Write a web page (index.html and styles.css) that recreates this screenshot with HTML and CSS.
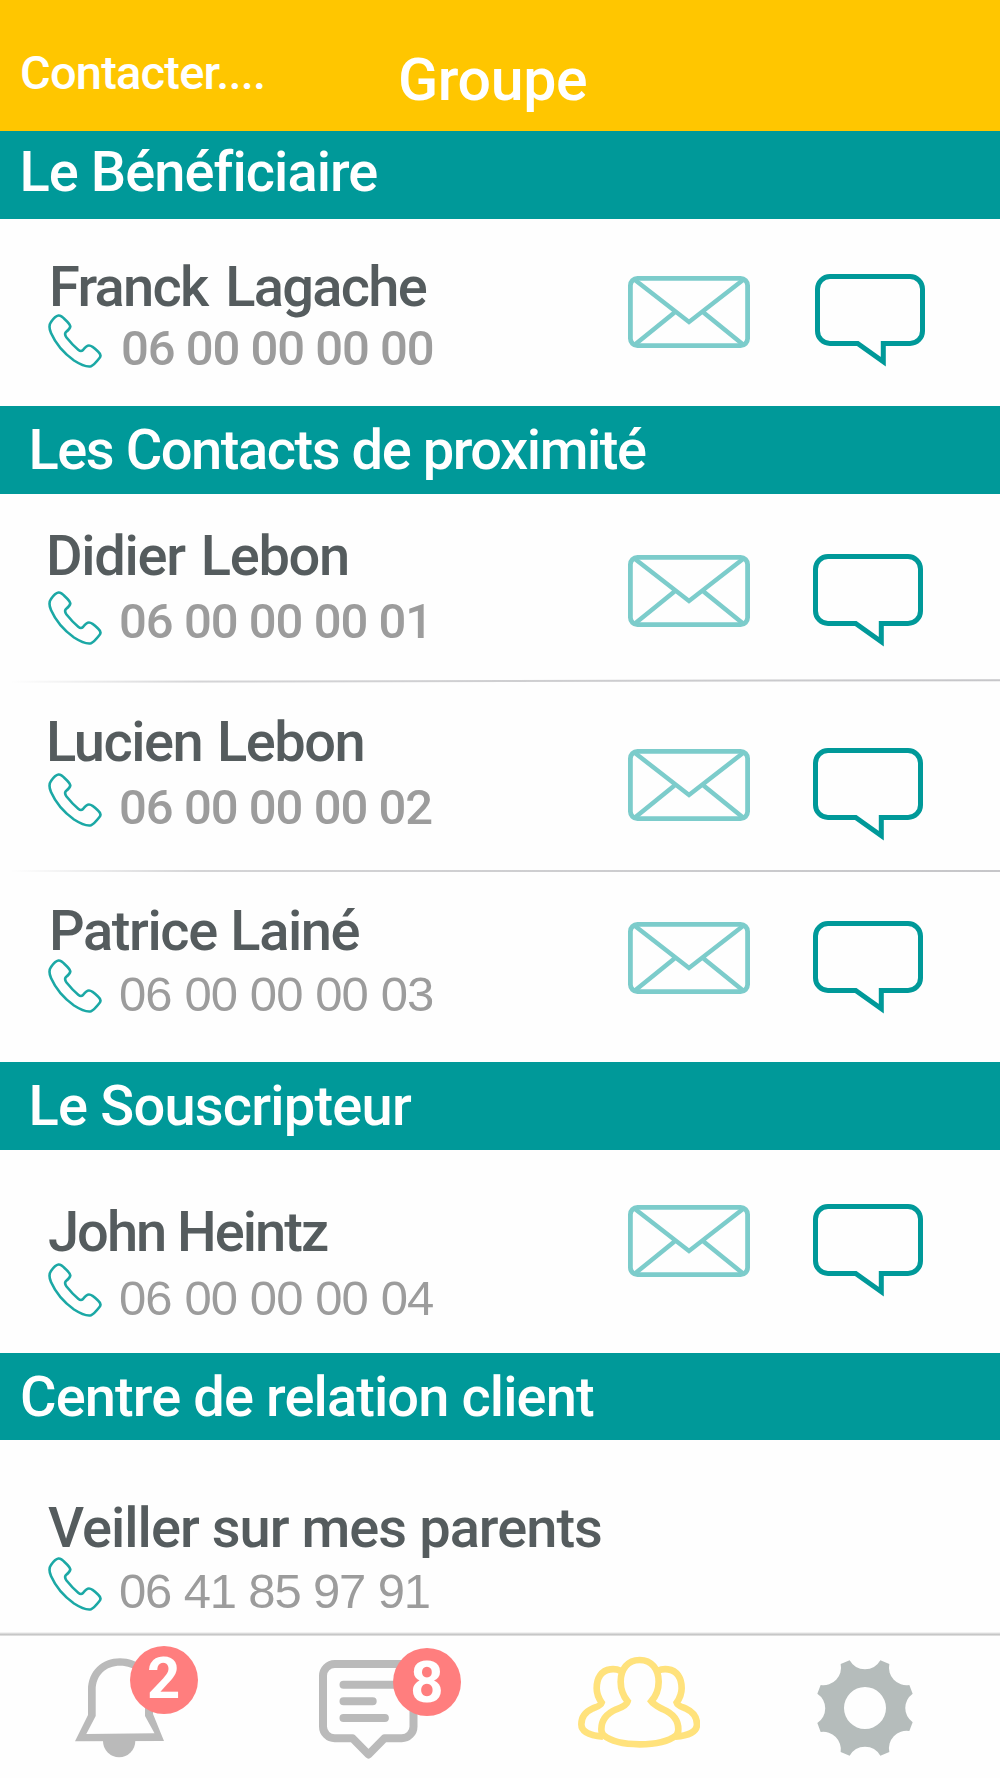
FILE: index.html
```html
<!DOCTYPE html>
<html lang="fr">
<head>
<meta charset="utf-8">
<title>Groupe</title>
<link rel="stylesheet" href="styles.css">
</head>
<body>
<svg class="defs" aria-hidden="true">
  <symbol id="phone" viewBox="0 0 54 54">
    <path fill="none" stroke="#1ba8a5" stroke-width="2.600" d="M10.5 1.5Q13 1.2 17 5.5Q22 10 22.3 12.5Q22 15 18 18Q16 20 18.5 23.5Q24.500 31 30.500 36Q33 38 35 36Q38.500 31.500 41 31.500Q44 31.500 50 37.500Q54 41 51.500 44Q46 51 43 52.300Q37 53.500 26 46.500Q10 35 3 19Q0 12 3 8Q7 2 10.500 1.500Z"/>
  </symbol>
  <symbol id="mail" viewBox="0 0 122 72">
    <g fill="none" stroke="#7ccccb">
      <rect x="2.400" y="2.400" width="117.200" height="67.200" rx="7" stroke-width="4.800"/>
      <path stroke-width="4.500" d="M7 4L61 46L115 4M7 68.500L46.500 36.500M115 68.500L75.500 36.500"/>
    </g>
  </symbol>
  <symbol id="chat" viewBox="0 0 110 93">
    <path fill="none" stroke="#009999" stroke-width="5" d="M15 2.500H95A12.500 12.500 0 0 1 107.500 15V57A12.500 12.500 0 0 1 95 69.500H68.300V87.700L42.700 69.500H15A12.500 12.500 0 0 1 2.500 57V15A12.500 12.500 0 0 1 15 2.500Z"/>
  </symbol>
</svg>

<header class="header">
  <span class="header-action">Contacter....</span>
  <h1 class="header-title">Groupe</h1>
</header>

<main>
  <h2 class="band band-beneficiary">Le Bénéficiaire</h2>
  <section class="contact franck">
    <div class="info">
      <div class="name">Franck Lagache</div>
      <div class="phone"><svg class="phone-icon"><use href="#phone"/></svg><span class="number">06 00 00 00 00</span></div>
    </div>
    <svg class="mail"><use href="#mail"/></svg>
    <svg class="chat"><use href="#chat"/></svg>
  </section>

  <h2 class="band band-nearby">Les Contacts de proximité</h2>
  <section class="contact didier">
    <div class="info">
      <div class="name">Didier Lebon</div>
      <div class="phone"><svg class="phone-icon"><use href="#phone"/></svg><span class="number">06 00 00 00 01</span></div>
    </div>
    <svg class="mail"><use href="#mail"/></svg>
    <svg class="chat"><use href="#chat"/></svg>
  </section>
  <div class="divider divider-tilted"></div>
  <section class="contact lucien">
    <div class="info">
      <div class="name">Lucien Lebon</div>
      <div class="phone"><svg class="phone-icon"><use href="#phone"/></svg><span class="number">06 00 00 00 02</span></div>
    </div>
    <svg class="mail"><use href="#mail"/></svg>
    <svg class="chat"><use href="#chat"/></svg>
  </section>
  <div class="divider"></div>
  <section class="contact patrice">
    <div class="info">
      <div class="name">Patrice Lainé</div>
      <div class="phone"><svg class="phone-icon"><use href="#phone"/></svg><span class="number thin">06 00 00 00 03</span></div>
    </div>
    <svg class="mail"><use href="#mail"/></svg>
    <svg class="chat"><use href="#chat"/></svg>
  </section>

  <h2 class="band band-subscriber">Le Souscripteur</h2>
  <section class="contact john">
    <div class="info">
      <div class="name">John Heintz</div>
      <div class="phone"><svg class="phone-icon"><use href="#phone"/></svg><span class="number thin">06 00 00 00 04</span></div>
    </div>
    <svg class="mail"><use href="#mail"/></svg>
    <svg class="chat"><use href="#chat"/></svg>
  </section>

  <h2 class="band band-support">Centre de relation client</h2>
  <section class="contact veiller">
    <div class="info">
      <div class="name">Veiller sur mes parents</div>
      <div class="phone"><svg class="phone-icon"><use href="#phone"/></svg><span class="number thin">06 41 85 97 91</span></div>
    </div>
  </section>
</main>

<nav class="tabs">
  <div class="tab tab-alerts">
    <svg width="89" height="99.500" viewBox="75 28 89 99.500" fill="#bababa">
      <path fill-rule="evenodd" d="M75 111.300L88 85V60C88 41 102 28.300 120 28.300C138 28.300 153 41 153 60V84L164 111ZM86.300 104L95.700 86V60C95.700 45 106 35.700 120 35.700C135 35.700 145 45 145 60V86L154.500 103.300Z"/>
      <path d="M103 111H135.300A16.150 16.150 0 0 1 103 111Z"/>
    </svg>
    <span class="badge">2</span>
  </div>
  <div class="tab tab-messages">
    <svg width="99" height="100" viewBox="318.800 30 99 100" fill="none" stroke="#bababa" stroke-width="8" stroke-linejoin="round" stroke-linecap="round">
      <path d="M334.500 34H401.500A11.800 11.800 0 0 1 413.300 45.800V96.400A11.800 11.800 0 0 1 401.500 108.200H384.300L368.300 124.500L352.300 108.200H334.500A11.800 11.800 0 0 1 322.800 96.400V45.800A11.800 11.800 0 0 1 334.500 34Z"/>
      <path d="M343.300 54.700H396M343.300 71.200H372.500M343.300 87.900H384.700"/>
    </svg>
    <span class="badge">8</span>
  </div>
  <div class="tab tab-group">
    <svg width="122" height="92.300" viewBox="235 78 366 277" fill="none" stroke="#ffe27c" stroke-width="20">
      <path id="side" d="M362 122C352 117 342 117 332 118C305 121 291 145 291 175C291 190 296 204 306 218C303 228 292 230 280 235C258 245 245 262 245 283C245 305 270 317 310 320"/>
      <use href="#side" transform="translate(837 0) scale(-1 1)"/>
      <path d="M420 90C384 90 363 118 363 155C363 178 369 196 384 214C381 225 370 231 350 238C322 250 305 270 305 298C305 305 306 311 312 316C335 335 375 343 420 343C465 343 505 335 530 316C535 311 536 305 536 298C536 270 518 250 490 238C475 230 464 226 455 214C471 196 477 178 477 155C477 118 456 90 420 90Z"/>
    </svg>
  </div>
  <div class="tab tab-settings">
    <svg width="96" height="96" viewBox="-144 -144 288 288" fill="#b5bcbb">
      <path fill-rule="evenodd" d="M-46 -143A52.700 52.700 0 0 0 46 -143L73 -132A52.700 52.700 0 0 0 133 -69L143 -43A52.700 52.700 0 0 0 143 43L133 69A52.700 52.700 0 0 0 73 132L46 143A52.700 52.700 0 0 0 -46 143L-73 132A52.700 52.700 0 0 0 -133 72L-143 45A52.700 52.700 0 0 0 -143 -43L-133 -69A52.700 52.700 0 0 0 -73 -132ZM0 -63A63 63 0 1 0 0 63A63 63 0 1 0 0 -63Z"/>
    </svg>
  </div>
</nav>
</body>
</html>
```
FILE: styles.css
```css
* { box-sizing: border-box; }

body {
  margin: 0;
  width: 1000px;
  height: 1778px;
  overflow: hidden;
  background: #fefefe;
  font-family: Roboto, "Liberation Sans", sans-serif;
  font-weight: 500;
}

svg { display: block; }
.defs { width: 0; height: 0; }

.header {
  display: grid;
  grid-template-columns: 378px auto;
  height: 131px;
  padding-left: 20px;
  background: #ffc600;
  color: #fff;
}
.header-action {
  margin-top: 48px;
  font-size: 47px;
  line-height: 50px;
  letter-spacing: -0.78px;
}
.header-title {
  margin: 50px 0 0;
  font-size: 59px;
  font-weight: 500;
  line-height: 60px;
  letter-spacing: -0.35px;
}

.band {
  margin: 0;
  height: 87.500px;
  padding: 14px 0 0 28.500px;
  background: #009999;
  color: #fff;
  font-size: 56px;
  font-weight: 500;
  line-height: 60px;
  white-space: nowrap;
}
.band-beneficiary { height: 88px; padding: 11px 0 0 19.500px; letter-spacing: -0.94px; }
.band-nearby { letter-spacing: -1.45px; }
.band-subscriber { letter-spacing: -0.78px; }
.band-support { padding-left: 20px; letter-spacing: -0.9px; }

.contact {
  display: grid;
  grid-template-columns: 580px 185px auto;
  align-items: start;
  padding-left: 48px;
}
.info { white-space: nowrap; }
.name {
  color: #555c5e;
  font-size: 56px;
  line-height: 60px;
}
.phone {
  display: flex;
  align-items: flex-start;
}
.phone-icon { width: 54px; height: 54px; margin-left: -0.500px; }
.number {
  margin-left: 17.500px;
  color: #9c9c9c;
  font-size: 49px;
  line-height: 50px;
  letter-spacing: -1px;
}
.thin {
  font-family: "Liberation Sans", Arial, sans-serif;
  font-weight: 400;
  letter-spacing: -0.9px;
}
.mail { width: 122px; height: 72px; }
.chat { width: 110px; height: 93px; }

.franck { height: 187px; grid-template-columns: 580px 187px auto; }
.franck .info { padding-top: 38px; }
.franck .name { margin-left: 1px; letter-spacing: -1.7px; word-spacing: 5.500px; }
.franck .phone { margin-top: -3px; }
.franck .number { margin: 10px 0 0 19.500px; letter-spacing: -1.05px; }
.franck .mail { margin-top: 57px; }
.franck .chat { margin-top: 55px; }

.didier { height: 186px; }
.didier .info { padding-top: 32.500px; }
.didier .name { margin-left: -2px; letter-spacing: -1.3px; word-spacing: 3.500px; }
.didier .phone { margin-top: 5px; }
.didier .number { margin-top: 6px; }
.didier .mail { margin-top: 61px; }
.didier .chat { margin-top: 60px; }

.lucien { height: 188.500px; }
.lucien .info { padding-top: 30px; }
.lucien .name { margin-left: -2px; letter-spacing: -1.5px; word-spacing: 2.500px; }
.lucien .phone { margin-top: 1px; }
.lucien .number { margin-top: 10px; }
.lucien .mail { margin-top: 67.500px; }
.lucien .chat { margin-top: 66.500px; }

.patrice { height: 190px; }
.patrice .info { padding-top: 29px; }
.patrice .name { margin-left: 1px; letter-spacing: -1.4px; word-spacing: 1px; }
.patrice .phone { margin-top: -2px; }
.patrice .number { margin-top: 10px; }
.patrice .mail { margin-top: 50px; }
.patrice .chat { margin-top: 49px; }

.john { height: 203px; }
.john .info { padding-top: 52px; }
.john .name { letter-spacing: -2px; }
.john .phone { margin-top: 1px; }
.john .number { margin-top: 10px; }
.john .mail { margin-top: 55px; }
.john .chat { margin-top: 54.500px; }

.veiller { height: 192px; }
.veiller .info { padding-top: 57.500px; }
.veiller .name { letter-spacing: -0.97px; }
.veiller .phone { margin-top: -1px; }
.veiller .number { margin-top: 9.500px; letter-spacing: -1.15px; }

.divider {
  height: 2px;
  background: linear-gradient(to right, rgba(200, 200, 203, 0) 10px, #d4d4d6 200px, #c6c6c9);
}
.divider-tilted { transform: rotate(-0.1deg); }

.tabs {
  display: grid;
  grid-template-columns: 244px 259px 239px auto;
  align-items: start;
  height: 146px;
  padding-left: 75px;
  background: linear-gradient(#fefefe, #e4e4e4 1px, #bdbdbd 3px, #fefefe 4px);
}
.tab { position: relative; }
.tab-alerts { padding-top: 26px; }
.tab-messages { padding-top: 28px; }
.tab-group { padding-top: 24px; }
.tab-settings { padding-top: 28px; }

.badge {
  position: absolute;
  left: 54.700px;
  top: 14px;
  width: 68px;
  height: 68px;
  border-radius: 50%;
  background: #ff7e7e;
  color: #fff;
  font-size: 58px;
  font-weight: 700;
  line-height: 64.500px;
  text-align: center;
}
.tab-messages .badge { left: 74px; top: 15.700px; line-height: 69.500px; }
```
